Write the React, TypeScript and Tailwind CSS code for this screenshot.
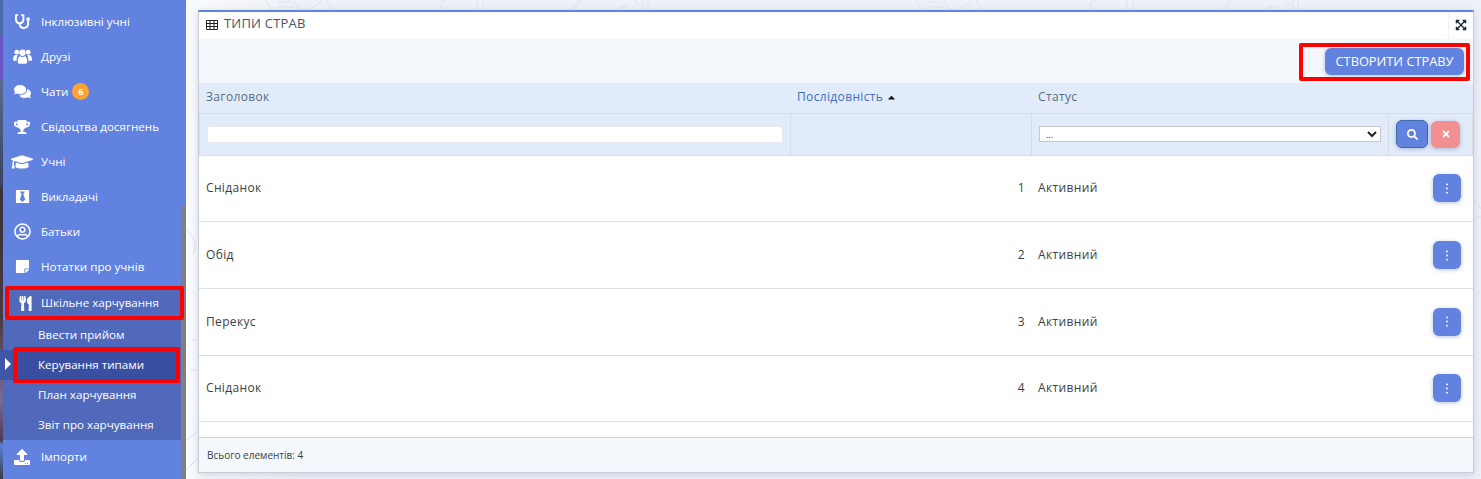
import type { ReactNode } from 'react'
import {
  FaStethoscope,
  FaComments,
  FaTrophy,
  FaGraduationCap,
  FaBlackTie,
  FaRegUserCircle,
  FaStickyNote,
  FaUtensils,
  FaUpload,
  FaExpandArrowsAlt,
  FaSearch,
  FaTimes,
  FaCaretUp
} from 'react-icons/fa'

const font = 'font-["Open_Sans","Noto_Sans",sans-serif]'

function UsersIcon() {
  return (
    <svg viewBox="0 0 18 16" className="h-[18px] w-[19px]" fill="currentColor">
      <circle cx="3.6" cy="3.4" r="2.3" />
      <circle cx="14.4" cy="3.4" r="2.3" />
      <circle cx="9" cy="4" r="3" />
      <path d="M0 11c0-3 .8-5 2.4-5h2.2C3.7 7.2 3.4 9 3.5 11.5H1.2C.5 11.5 0 11.4 0 11zM18 11c0-3-.8-5-2.4-5h-2.2c.9 1.200 1.200 3 1.100 5.500h2.300c.7 0 1.200-.1 1.200-.5z" />
      <path d="M4.500 12.500c0-3.500 1-5.300 2.300-5.300.5.400 1.300.7 2.200.7s1.700-.3 2.200-.7c1.300 0 2.300 1.800 2.300 5.300 0 1.300-.9 2-2 2H6.500c-1.100 0-2-.7-2-2z" />
    </svg>
  )
}

function DotsIcon() {
  return (
    <svg viewBox="0 0 4 12" className="h-[11px] w-[4px]" fill="currentColor">
      <circle cx="2" cy="1.500" r="1" />
      <circle cx="2" cy="6" r="1" />
      <circle cx="2" cy="10.500" r="1" />
    </svg>
  )
}

function TableIcon() {
  return (
    <svg viewBox="0 0 12 10" className="mr-[6px] mt-[2px] h-[10px] w-[12px]" fill="none" stroke="#222" strokeWidth="1">
      <path d="M.5.5h11v9H.5zM.5 3.5h11M.5 6.5h11M4 .5v9M8 .5v9" />
    </svg>
  )
}

// faint line drawing of the page background, seen only above the panel
function Doodles() {
  return (
    <svg className="absolute left-0 top-0 h-[479px] w-full" fill="none" stroke="#dfe3ea" strokeWidth="1">
      {[0, 650].map(x => (
        <g key={x} transform={`translate(${x} 0)`}>
          <path d="M80 0l6 10M92 2h14M92 7h16M108 0c2 8 8 12 14 10l14-9M140 0l6 10" />
          <path d="M255 10V4c0-3 3-4 6-4M290 0c2 4 2 7 1 10M296 0c2 4 2 7 1 10" />
          <path d="M385 10l8-10M388 10l8-10M430 10c3-3 8-4 12-4M450 0c-2 4 2 6 6 2M457 10V0M462 10V0" />
        </g>
      ))}
      <path d="M1 230c8 8 10 16 6 24M6 340h14l-4 30H4M0 440c8-4 12-8 16-16M0 470l14-14" />
      <path d="M1288 200c3 2 5 6 7 9M1288 218c2-1 5-1 7-1" />
    </svg>
  )
}

const topItems: { label: string; icon: ReactNode; badge?: string }[] = [
  { label: 'Інклюзивні учні', icon: <FaStethoscope className="text-[15px]" /> },
  { label: 'Друзі', icon: <UsersIcon /> },
  { label: 'Чати', icon: <FaComments className="text-[17px]" />, badge: '6' },
  { label: 'Свідоцтва досягнень', icon: <FaTrophy className="text-[16px]" /> },
  { label: 'Учні', icon: <FaGraduationCap className="text-[22px]" /> },
  { label: 'Викладачі', icon: <FaBlackTie className="text-[15px]" /> },
  { label: 'Батьки', icon: <FaRegUserCircle className="text-[17px]" /> },
  { label: 'Нотатки про учнів', icon: <FaStickyNote className="text-[15px]" /> }
]

const subItems = ['Ввести прийом', 'Керування типами', 'План харчування', 'Звіт про харчування']

const rows = [
  { title: 'Сніданок', order: 1, h: 'h-[66px] pb-[1px]' },
  { title: 'Обід', order: 2, h: 'h-[67px]' },
  { title: 'Перекус', order: 3, h: 'h-[67px] pb-[1px]' },
  { title: 'Сніданок', order: 4, h: 'h-[66px] pb-[1px]' }
]

const cols = 'grid grid-cols-[592px_241px_357px_84px]'

function SideRow({ item }: { item: (typeof topItems)[number] }) {
  return (
    <div className="flex h-[35px] items-center text-[11.6px] text-white">
      <span className="flex w-[38px] shrink-0 items-center justify-center">{item.icon}</span>
      <span>{item.label}</span>
      {item.badge ? (
        <span className="ml-1 flex h-[17px] w-[17px] items-center justify-center rounded-full bg-[#ffa233] text-[9px] font-bold">
          {item.badge}
        </span>
      ) : null}
    </div>
  )
}

function Sidebar() {
  return (
    <aside className="relative h-full w-[183px] shrink-0 bg-[#6282e0] pt-[4px]">
      {topItems.map(item => (
        <SideRow key={item.label} item={item} />
      ))}
      <div className="relative z-10 ml-[2px] mr-[2px] mt-[2px] flex h-[34px] items-center rounded-[2px] border-[4px] border-[#ff0000] bg-[#5069bb] text-[11.6px] text-white">
        <span className="flex w-[32px] shrink-0 items-center justify-center">
          <FaUtensils className="text-[15px]" />
        </span>
        <span>Шкільне харчування</span>
      </div>
      <div className="bg-[#5069bb]">
        {subItems.map(label => {
          const active = label === 'Керування типами'
          return (
            <div key={label} className="relative h-[30px] text-[11.6px] text-white">
              {active ? (
                <>
                  <span className="absolute -left-[3px] top-0 h-[30px] w-[20px] bg-[#3e56a8]" />
                  <span className="absolute left-[2px] top-[8px] h-0 w-0 border-y-[6px] border-l-[6px] border-y-transparent border-l-white" />
                  <span className="absolute -top-[3px] left-[10px] h-[36px] w-[167px] rounded-[2px] border-[4px] border-[#ff0000] bg-[#3a4fa2]" />
                </>
              ) : null}
              <span className="relative flex h-full items-center pl-[35px]">{label}</span>
            </div>
          )
        })}
      </div>
      <div className="pb-[1px]">
        <div className="-mt-[1px]">
          <SideRow item={{ label: 'Імпорти', icon: <FaUpload className="text-[16px]" /> }} />
        </div>
      </div>
      <span className="absolute bottom-0 right-0 top-[205px] w-[5px] bg-[#7d7f83]" />
    </aside>
  )
}

function ActionButton({ children, className }: { children: ReactNode; className: string }) {
  return (
    <button
      type="button"
      className={`flex items-center justify-center rounded-[6px] text-white shadow-[0_1px_4px_rgba(60,80,140,0.35)] ${className}`}
    >
      {children}
    </button>
  )
}

function TablePanel() {
  return (
    <section className="relative flex h-[463px] w-[1276px] flex-col overflow-hidden border-x border-b border-t-2 border-x-[#c9cdd5] border-b-[#c9cdd5] border-t-[#6282e0] bg-white shadow-[0_2px_8px_rgba(90,110,170,0.25)]">
      <header className="flex h-[27px] shrink-0 items-center justify-between bg-white">
        <div className="flex items-center pb-[3px] pl-[7px] text-[13px] tracking-[0.2px] text-[#4a5568]">
          <TableIcon />
          ТИПИ СТРАВ
        </div>
        <div className="flex h-full w-[25px] items-center justify-center border-l border-[#eef0f3] pb-[2px] text-[#1f2937]">
          <FaExpandArrowsAlt className="text-[12px]" />
        </div>
      </header>

      <div className="flex h-[44px] shrink-0 items-start justify-end bg-[#f4f7fb] pr-[3px] pt-[4px]">
        <div className="rounded-[2px] border-[4px] border-[#ff0000] pb-[2px] pl-[22px] pr-[2px] pt-[1px]">
          <ActionButton className="h-[27px] w-[139px] bg-[#6282e0] text-[12.8px]">СТВОРИТИ СТРАВУ</ActionButton>
        </div>
      </div>

      <div className={`${cols} h-[30px] shrink-0 items-center bg-[#e2ebfa] pb-[2px] text-[12px] tracking-[0.35px] text-[#5a6b80]`}>
        <span className="pl-[7px]">Заголовок</span>
        <span className="flex items-center pl-[6px] text-[#3f6fb5]">
          Послідовність
          <FaCaretUp className="ml-[3px] text-[11px] text-[#111]" />
        </span>
        <span className="pl-[6px]">Статус</span>
        <span />
      </div>

      <div className={`${cols} h-[43px] shrink-0 border-b border-t border-[#d8dde3] bg-[#e2ebfa]`}>
        <div className="flex items-center border-l border-r border-[#d8dde3] px-[7px]">
          <div className="h-[17px] w-full rounded-[3px] border border-[#e4e9f0] bg-white" />
        </div>
        <div className="border-r border-[#d8dde3]" />
        <div className="flex items-center border-r border-[#d8dde3] px-[7px] pb-[1px]">
          <select className="h-[16px] w-full border border-[#c4c6ca] bg-white pl-[2px] text-[9px] text-[#222]" defaultValue="...">
            <option>...</option>
          </select>
        </div>
        <div className="flex items-center gap-[3px] border-r border-[#d8dde3] pb-[1px] pl-[7px]">
          <ActionButton className="h-[28px] w-[32px] border border-[#3f6aa8] bg-[#6282e0] text-[11px]">
            <FaSearch />
          </ActionButton>
          <ActionButton className="h-[27px] w-[29px] bg-[#f28f91] text-[10px]">
            <FaTimes />
          </ActionButton>
        </div>
      </div>

      {rows.map(row => (
        <div key={row.order} className={`${cols} ${row.h} shrink-0 items-center border-b border-[#dcdfe4] text-[12px] tracking-[0.35px] text-[#3a3f47]`}>
          <span className="pl-[7px]">{row.title}</span>
          <span className="pr-[7px] text-right">{row.order}</span>
          <span className="pl-[6px]">Активний</span>
          <div className="flex justify-end pr-[12px]">
            <ActionButton className="h-[28px] w-[28px] bg-[#6282e0]">
              <DotsIcon />
            </ActionButton>
          </div>
        </div>
      ))}

      <div className="h-[16px] shrink-0 border-b border-[#d0d4da]" />
      <footer className="flex flex-1 items-center bg-[#f4f7fb] pl-[8px] text-[10px] text-[#3a3f47]">
        Всього елементів: 4
      </footer>
    </section>
  )
}

export default function App() {
  return (
    <div className={`${font} flex h-[479px] w-[1481px] overflow-hidden bg-[#eef1f7]`}>
      <div className="h-full w-[3px] shrink-0 bg-[linear-gradient(180deg,#4a6aa8_0,#4a6aa8_35px,#6a55c4_36px,#6a55c4_78px,#5a6a90_80px,#3a4360_185px,#3d3038_190px,#4a3a42_320px,#7a6a9a_400px,#4a3a52_440px,#5a82d8_445px,#3a3a4a_479px)]" />
      <Sidebar />
      <main className="relative flex-1 bg-[linear-gradient(90deg,#fafbfc,#eef1f7_120px)] pl-[12px] pt-[10px]">
        <Doodles />
        <TablePanel />
      </main>
    </div>
  )
}
